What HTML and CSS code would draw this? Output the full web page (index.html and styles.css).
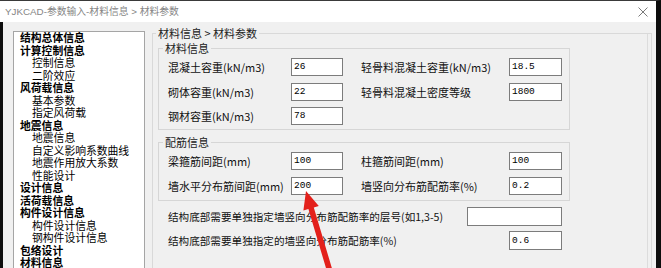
FILE: index.html
```html
<!DOCTYPE html>
<html lang="zh-CN">
<head>
<meta charset="utf-8">
<title>YJKCAD-参数输入</title>
<link rel="stylesheet" href="styles.css">
</head>
<body>
<div class="window">
  <div class="titlebar">
    <span class="title">YJKCAD-参数输入-材料信息 &gt; 材料参数</span>
    <svg class="close" viewBox="0 0 10 10" width="10" height="10"><path d="M0.5 0.5L9.5 9.5M9.5 0.5L0.5 9.5" stroke="#7a7a7a" stroke-width="1" fill="none"/></svg>
  </div>
  <div class="main">
    <ul class="tree">
      <li class="grp">结构总体信息</li>
      <li class="grp">计算控制信息</li>
      <li class="sub">控制信息</li>
      <li class="sub">二阶效应</li>
      <li class="grp">风荷载信息</li>
      <li class="sub">基本参数</li>
      <li class="sub">指定风荷载</li>
      <li class="grp">地震信息</li>
      <li class="sub">地震信息</li>
      <li class="sub">自定义影响系数曲线</li>
      <li class="sub">地震作用放大系数</li>
      <li class="sub">性能设计</li>
      <li class="grp">设计信息</li>
      <li class="grp">活荷载信息</li>
      <li class="grp">构件设计信息</li>
      <li class="sub">构件设计信息</li>
      <li class="sub">钢构件设计信息</li>
      <li class="grp">包络设计</li>
      <li class="grp">材料信息</li>
    </ul>
    <fieldset class="page">
      <legend>材料信息 &gt; 材料参数</legend>
      <fieldset class="group">
        <legend>材料信息</legend>
        <div class="grid">
          <span class="lbl">混凝土容重(kN/m3)</span><span class="in">26</span>
          <span class="lbl lbl2">轻骨料混凝土容重(kN/m3)</span><span class="in">18.5</span>
          <span class="lbl">砌体容重(kN/m3)</span><span class="in">22</span>
          <span class="lbl lbl2">轻骨料混凝土密度等级</span><span class="in">1800</span>
          <span class="lbl">钢材容重(kN/m3)</span><span class="in">78</span>
        </div>
      </fieldset>
      <fieldset class="group group2">
        <legend>配筋信息</legend>
        <div class="grid">
          <span class="lbl">梁箍筋间距(mm)</span><span class="in">100</span>
          <span class="lbl lbl2">柱箍筋间距(mm)</span><span class="in">100</span>
          <span class="lbl">墙水平分布筋间距(mm)</span><span class="in">200</span>
          <span class="lbl lbl2">墙竖向分布筋配筋率(%)</span><span class="in">0.2</span>
        </div>
      </fieldset>
      <div class="extra">
        <span class="lbl">结构底部需要单独指定墙竖向分布筋配筋率的层号(如1,3-5)</span><span class="in wide"></span>
        <span class="lbl">结构底部需要单独指定的墙竖向分布筋配筋率(%)</span><span class="in narrow">0.6</span>
      </div>
    </fieldset>
  </div>
  <svg class="arrow" width="661" height="268" viewBox="0 0 661 268">
    <polygon points="306,191 318.8,206 313.8,207.5 333.7,274.2 328.3,275.8 308.4,209.1 303.4,210.6" fill="#e3201b"/>
  </svg>
</div>
</body>
</html>
```
FILE: styles.css
```css
* { box-sizing: border-box; }
html, body { margin: 0; padding: 0; background: #0d0d0d; }
body {
  width: 661px;
  height: 268px;
  overflow: hidden;
  font-family: "Noto Sans CJK SC", "Noto Sans", sans-serif;
}
.window {
  position: relative;
  width: 661px;
  height: 268px;
  border-top: 1px solid #3a3a3a;
  border-right: 5px solid #0d0d0d;
  background: #f0f0f0;
  overflow: hidden;
  display: flex;
  flex-direction: column;
}
.titlebar {
  flex: none;
  height: 21px;
  background: #fff;
  display: flex;
  align-items: center;
  justify-content: space-between;
  padding: 0 8px 0 5px;
}
.title {
  font-family: "Liberation Sans", "Noto Sans CJK SC", sans-serif;
  font-size: 9.8px;
  line-height: 14px;
  color: #858585;
  white-space: nowrap;
}
.close { display: block; }
.main {
  flex: 1;
  min-height: 0;
  display: flex;
  align-items: flex-start;
  border-left: 3px solid #0d0d0d;
  background: #f0f0f0;
}
.tree {
  list-style: none;
  margin: 9px 0 0 10px;
  padding: 0;
  width: 132px;
  height: 260px;
  flex: none;
  background: #fff;
  border: 1px solid #a5a5a5;
  font-family: "Liberation Sans", "Noto Sans CJK SC", sans-serif;
  font-size: 10.8px;
  line-height: 12.5px;
  color: #000;
  white-space: nowrap;
}
.tree .grp { font-weight: bold; padding-left: 6px; }
.tree .sub { padding-left: 18px; }
.page {
  margin: 4px 0 0 7px;
  width: 500px;
  min-width: 0;
  min-height: 262px;
  padding: 1px 5px 0 5px;
  border: 1px solid #d9d9d9;
  box-shadow: inset -3px 0 0 #f0f0f0, inset -4px 0 0 #dcdcdc;
}
.page > legend {
  font-size: 11px;
  line-height: 14px;
  padding: 0 2px;
  margin-left: -2px;
  color: #222;
}
.group {
  margin: 0;
  width: 412px;
  min-width: 0;
  padding: 3px 6px 4px 9px;
  border: 1px solid #d6d6d6;
}
.group2 { margin-top: 5px; padding-bottom: 5px; }
.group > legend {
  font-size: 11px;
  line-height: 14px;
  padding: 0 2px;
  margin-left: -5px;
  color: #222;
}
.grid {
  display: grid;
  grid-template-columns: 123px 52px 166px 53px;
  row-gap: 6.5px;
  align-items: center;
}
.lbl {
  font-size: 11px;
  line-height: 18px;
  color: #111;
  white-space: nowrap;
}
.lbl2 { padding-left: 18px; }
.in {
  display: block;
  height: 18px;
  border: 1px solid #7c7c7c;
  background: #fff;
  font-family: "Liberation Mono", monospace;
  font-size: 9.5px;
  line-height: 16px;
  padding-left: 2px;
  color: #000;
}
.extra {
  display: grid;
  grid-template-columns: 1fr auto;
  row-gap: 5px;
  align-items: center;
  width: 394px;
  margin: 6.5px 0 0 10px;
}
.extra .lbl { font-size: 10.6px; }
.extra .in { height: 19px; line-height: 17px; justify-self: end; }
.wide { width: 95px; }
.narrow { width: 53px; }
.arrow {
  position: absolute;
  left: 0;
  top: -1px;
  pointer-events: none;
}
```
